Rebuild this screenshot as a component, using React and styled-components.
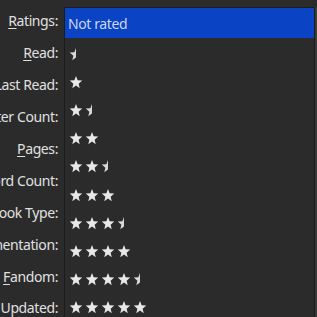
import React from "react";
import styled, { createGlobalStyle } from "styled-components";

const Global = createGlobalStyle`
  html, body { margin: 0; padding: 0; background: #2b2b2b; }
  body { width: 317px; height: 317px; overflow: hidden; font-family: "Noto Sans", "Open Sans", sans-serif; }
`;

const Page = styled.div`
  display: flex;
  width: 317px;
  height: 317px;
  background: #2b2b2b;
  overflow: hidden;
`;

const LabelColumn = styled.div`
  width: 64px;
  flex: none;
  display: flex;
  flex-direction: column;
  align-items: flex-end;
  padding-top: 5px;
  overflow: hidden;
`;

const Label = styled.div`
  height: 31.9px;
  flex: none;
  display: flex;
  align-items: center;
  justify-content: flex-end;
  padding-right: 6px;
  white-space: nowrap;
  font-size: 14px;
  letter-spacing: -0.4px;
  color: #e0e0e0;
  u { text-decoration: underline; text-underline-offset: 2px; }
`;

const Popup = styled.div`
  margin-top: 7px;
  width: 249px;
  flex: none;
  border: 1px solid #1b1b1b;
  border-bottom: none;
  background: #2b2b2b;
  display: flex;
  flex-direction: column;
  box-shadow: 2px 0 0 #3a3a3a;
`;

const Item = styled.div`
  height: ${(p) => (p.$selected ? "30px" : "28.1px")};
  flex: none;
  display: flex;
  align-items: center;
  padding-left: ${(p) => (p.$selected ? "3px" : "4px")};
  background: ${(p) => (p.$selected ? "#0a43c3" : "transparent")};
  color: ${(p) => (p.$selected ? "#cdd6ee" : "#e4e4e4")};
  font-size: 14px;
  letter-spacing: -0.4px;
`;

const Stars = styled.div`
  display: flex;
  gap: 2px;
  margin-top: 4px;
`;

const StarSvg = ({ half }) => (
  <svg width="14" height="14" viewBox="0 0 24 24">
    {half ? (
      <path d="M12 1.5 L12 18.2 L5.6 22.5 L7.5 14.8 L1.3 9.6 L9.2 8.9 Z" fill="#d8d8d8" />
    ) : (
      <path d="M12 1.5 L14.8 8.9 L22.7 9.6 L16.5 14.8 L18.4 22.5 L12 18.2 L5.6 22.5 L7.5 14.8 L1.3 9.6 L9.2 8.9 Z" fill="#e8e8e8" />
    )}
  </svg>
);

const labels = [
  <>
    <u>R</u>atings:
  </>,
  <>
    <u>R</u>ead:
  </>,
  <>Last Read:</>,
  <>Chapter Count:</>,
  <>
    <u>P</u>ages:
  </>,
  <>Word Count:</>,
  <>Book Type:</>,
  <>Documentation:</>,
  <>
    <u>F</u>andom:
  </>,
  <>Updated:</>,
];

const ratings = [0.5, 1, 1.5, 2, 2.5, 3, 3.5, 4, 4.5, 5];

export default function App() {
  return (
    <>
      <Global />
      <Page>
        <LabelColumn>
          {labels.map((l, i) => (
            <Label key={i}>{l}</Label>
          ))}
        </LabelColumn>
        <Popup>
          <Item $selected>Not rated</Item>
          {ratings.map((r) => {
            const full = Math.floor(r);
            const half = r - full > 0;
            return (
              <Item key={r}>
                <Stars>
                  {Array.from({ length: full }).map((_, i) => (
                    <StarSvg key={i} />
                  ))}
                  {half && <StarSvg half />}
                </Stars>
              </Item>
            );
          })}
        </Popup>
      </Page>
    </>
  );
}
